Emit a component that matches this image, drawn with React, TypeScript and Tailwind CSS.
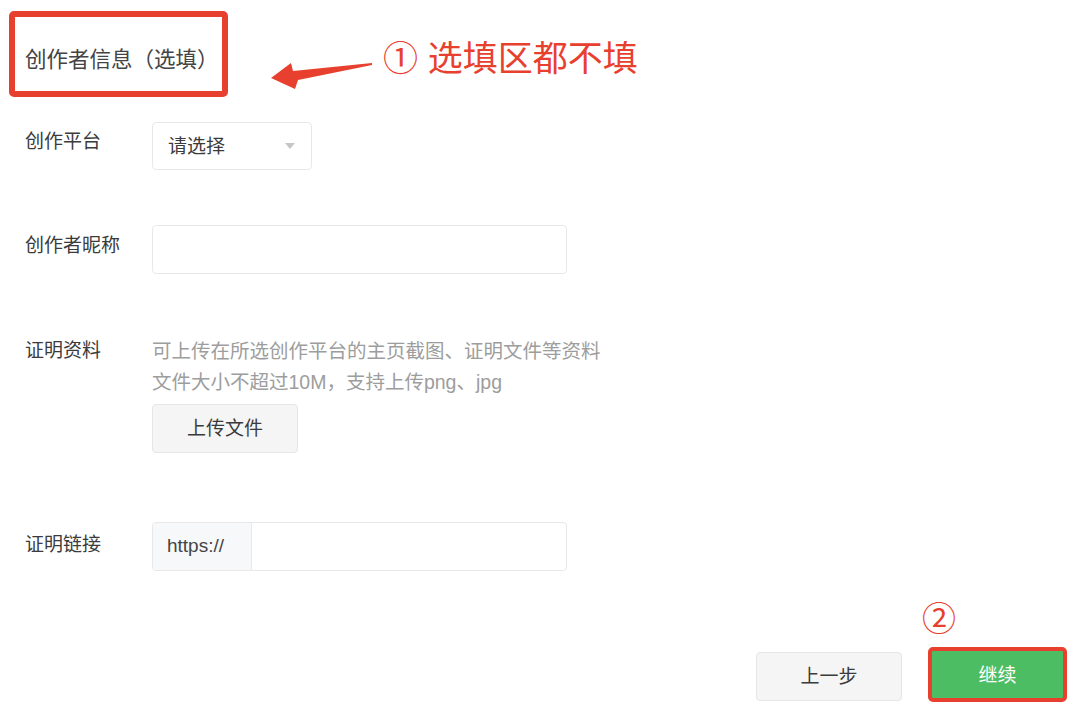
import React from "react";

const font = { fontFamily: '"Liberation Sans", "Noto Sans CJK SC", sans-serif' };

function Arrow() {
  return (
    <svg width="104" height="36" viewBox="0 0 104 36" className="shrink-0">
      <polygon
        points="2,22 22,7 24,15 103,7 103,9 29,24 26,33"
        fill="#e8402e"
      />
    </svg>
  );
}

function Label({ children, className = "" }: { children: React.ReactNode; className?: string }) {
  return (
    <div className={`w-[127px] shrink-0 text-[19px] leading-[28px] text-[#3b3b3b] ${className}`}>
      {children}
    </div>
  );
}

export default function App() {
  return (
    <div className="relative w-[1080px] h-[721px] bg-white overflow-hidden" style={font}>
      {/* Title + annotation */}
      <div className="flex items-start pt-[11px] pl-[9px]">
        <div className="w-[219px] shrink-0 border-[6px] border-[#e8402e] rounded-[5px] pl-[10px] pt-[12px] h-[86px] flex items-center whitespace-nowrap">
          <span className="text-[21.5px] leading-[30px] text-[#444]">创作者信息（选填）</span>
        </div>
        <div className="ml-[41px] mt-[45px]">
          <Arrow />
        </div>
        <div className="ml-[10px] mt-[28px] text-[35px] leading-[40px] text-[#e8402e] whitespace-nowrap">
          ① 选填区都不填
        </div>
      </div>

      <div className="pl-[25px]">
        {/* 创作平台 */}
        <div className="flex items-start mt-[25px]">
          <Label className="mt-[6px]">创作平台</Label>
          <div className="w-[160px] h-[48px] border border-[#e8e8e8] rounded-[4px] flex items-center justify-between pl-[15px] pr-[15px]">
            <span className="text-[19px] text-[#3b3b3b] mt-[2px]">请选择</span>
            <span className="w-0 h-0 border-l-[5.5px] border-r-[5.5px] border-t-[6px] border-l-transparent border-r-transparent border-t-[#c6c6c6] mr-[1px]" />
          </div>
        </div>

        {/* 创作者昵称 */}
        <div className="flex items-start mt-[55px]">
          <Label className="mt-[7px]">创作者昵称</Label>
          <div className="w-[415px] h-[49px] border border-[#e8e8e8] rounded-[4px]" />
        </div>

        {/* 证明资料 */}
        <div className="flex items-start mt-[63px]">
          <Label>证明资料</Label>
          <div className="flex flex-col items-start">
            <div className="text-[19.5px] leading-[31px] text-[#9d9d9d] -mt-[1px]">
              <div>可上传在所选创作平台的主页截图、证明文件等资料</div>
              <div>文件大小不超过10M，支持上传png、jpg</div>
            </div>
            <button className="mt-[6px] w-[146px] h-[49px] bg-[#f5f5f5] border border-[#e6e6e6] rounded-[4px] text-[19px] text-[#3b3b3b] pt-[2px]">
              上传文件
            </button>
          </div>
        </div>

        {/* 证明链接 */}
        <div className="flex items-start mt-[69px]">
          <Label className="mt-[9px]">证明链接</Label>
          <div className="w-[415px] h-[49px] border border-[#e8e8e8] rounded-[4px] flex overflow-hidden">
            <div className="w-[99px] bg-[#f7f8fa] border-r border-[#e8e8e8] flex items-center pl-[14px] text-[19px] text-[#444]">
              https://
            </div>
            <div className="flex-1" />
          </div>
        </div>
      </div>

      {/* Footer buttons */}
      <div className="flex justify-end items-end pr-[13px] mt-[31px]">
        <button className="w-[146px] h-[49px] bg-[#f5f5f5] border border-[#e6e6e6] rounded-[4px] text-[19px] text-[#3b3b3b] mb-[1px] pt-[2px]">
          上一步
        </button>
        <div className="ml-[26px] flex flex-col items-start">
          <div className="-ml-[6px] text-[34px] leading-[34px] text-[#e8402e]">②</div>
          <div className="mt-[11px] w-[139px] h-[55px] border-[4px] border-[#e8402e] rounded-[5px] bg-[#4dbd63] flex items-center justify-center text-[19px] text-white pt-[4px]">
            继续
          </div>
        </div>
      </div>
    </div>
  );
}
